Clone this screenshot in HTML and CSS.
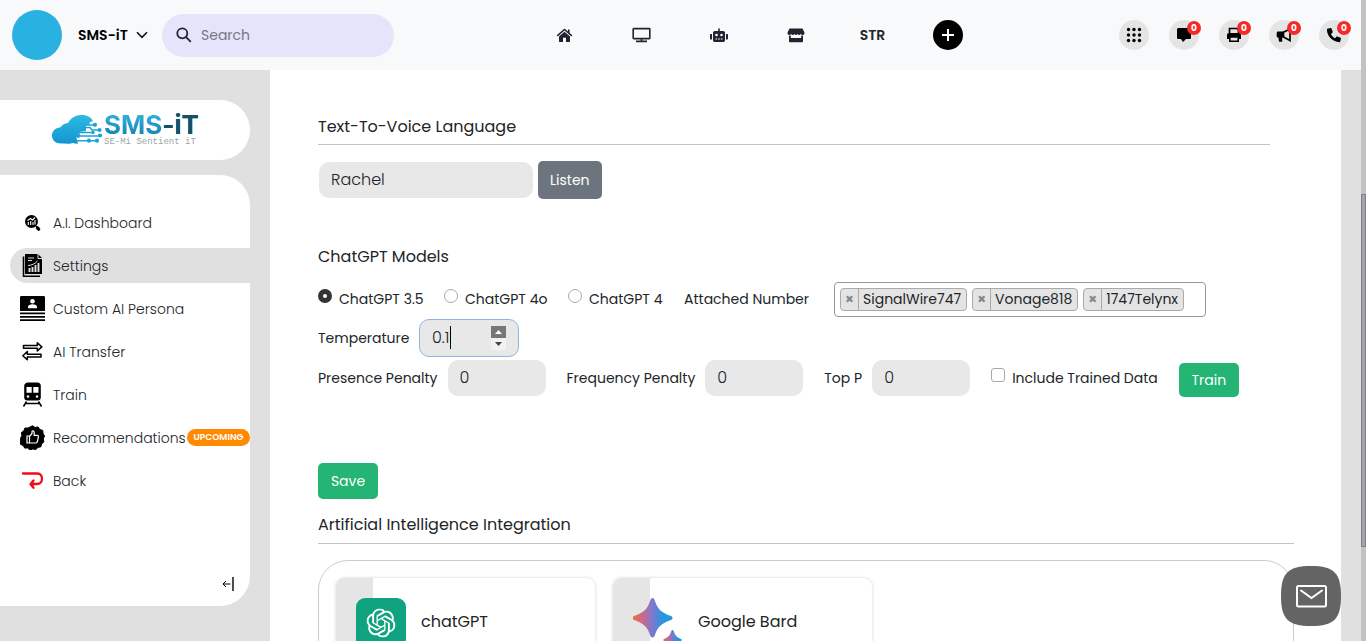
FILE: index.html
```html
<!DOCTYPE html>
<html lang="en">
<head>
<meta charset="utf-8">
<meta name="viewport" content="width=device-width, initial-scale=1">
<title>SMS-iT Settings</title>
<link rel="stylesheet" href="styles.css">
</head>
<body>
<div class="app">
  <header class="topbar">
    <div class="brand">
      <span class="avatar"></span>
      <button class="account" type="button">SMS-iT
        <svg width="12" height="8" viewBox="0 0 12 8" fill="none" stroke="#111" stroke-width="1.6"><path d="M1 1.2 6 6.4 11 1.2"/></svg>
      </button>
      <label class="search">
        <svg width="16" height="16" viewBox="0 0 16 16" fill="none" stroke="#212330" stroke-width="1.8"><circle cx="6.3" cy="6.3" r="5"/><path d="m9.8 9.8 5 5"/></svg>
        <input type="search" placeholder="Search" aria-label="Search">
      </label>
    </div>
    <nav class="topnav" aria-label="Main">
      <a href="#home" aria-label="Home"><svg width="17" height="15" viewBox="0 0 17 15" fill="#212330"><path d="M8.5 3.8 3 8.4v5.1c0 .3.2.5.5.5H7V9.8h3V14h3.5c.3 0 .5-.2.5-.5V8.400z"/><path d="M1.200 7.800 8.500 1.500l7.300 6.300M12.800 1.500v3.600" fill="none" stroke="#212330" stroke-width="1.600"/></svg></a>
      <a href="#desktop" aria-label="Desktop"><svg width="19" height="16" viewBox="0 0 19 16" fill="none" stroke="#212330" stroke-width="1.600"><rect x="1.200" y="1.600" width="16.600" height="10" rx=".5"/><path d="M9.500 12v2.400M4 14.400h11"/></svg></a>
      <a href="#bots" aria-label="Bots"><svg width="18" height="15" viewBox="0 0 18 15" fill="#212330"><path d="M8.200.5h1.600V3h3.400c1 0 1.800.8 1.800 1.800v7.400c0 1-.8 1.800-1.800 1.800H4.800c-1 0-1.800-.8-1.800-1.800V4.800C3 3.800 3.800 3 4.800 3h3.400zM0 7c0-.6.500-1 1-1h1v5.500H1c-.6 0-1-.5-1-1zM16 6h1c.6 0 1 .4 1 1v3.500c0 .500-.4 1-1 1h-1z"/><circle cx="6.500" cy="7" r="1.300" fill="#f8f9fb"/><circle cx="11.500" cy="7" r="1.300" fill="#f8f9fb"/><path d="M5.500 11h1.700M8.200 11h1.600M10.800 11h1.700" stroke="#f8f9fb" stroke-width="1.200"/></svg></a>
      <a href="#store" aria-label="Store"><svg width="18" height="15" viewBox="0 0 18 15" fill="#212330"><path d="M2.600.5h12.800L17.300 4c.6 1.500-.2 3-1.600 3-.9 0-1.500-.4-1.900-1-.8 1.300-2.600 1.300-3.300 0-.8 1.300-2.500 1.300-3.200 0-.8 1.300-2.500 1.300-3.300 0C3.600 6.600 3 7 2.200 7 .900 7 .1 5.500.700 4zM2 7.500h1.800V10h10.400V7.500H16V13c0 .8-.4 1.300-1.200 1.300H3.200C2.400 14.300 2 13.800 2 13z"/></svg></a>
      <a href="#str" class="str">STR</a>
      <button class="add" type="button" aria-label="Add"><svg width="14" height="14" viewBox="0 0 14 14" stroke="#fff" stroke-width="2"><path d="M7 1v12M1 7h12"/></svg></button>
    </nav>
    <div class="tools">
      <button class="tool" type="button" aria-label="Apps"><svg width="16" height="16" viewBox="0 0 16 16"><circle cx="2.500" cy="2.500" r="1.700"/><circle cx="8" cy="2.500" r="1.700"/><circle cx="13.500" cy="2.500" r="1.700"/><circle cx="2.500" cy="8" r="1.700"/><circle cx="8" cy="8" r="1.700"/><circle cx="13.500" cy="8" r="1.700"/><circle cx="2.500" cy="13.500" r="1.700"/><circle cx="8" cy="13.500" r="1.700"/><circle cx="13.500" cy="13.500" r="1.700"/></svg></button>
      <button class="tool" type="button" aria-label="Messages"><svg width="16" height="16" viewBox="0 0 16 16"><path d="M2.500 1h11C14.600 1 15 1.600 15 2.500v8c0 1-.6 1.500-1.500 1.500H10l-3 3-2-3H2.500C1.500 12 1 11.500 1 10.500v-8C1 1.600 1.500 1 2.500 1z"/></svg><span class="count">0</span></button>
      <button class="tool" type="button" aria-label="Fax"><svg width="16" height="16" viewBox="0 0 16 16"><path d="M3.500 6V1.500H11L12.500 3v3" fill="none" stroke="#000" stroke-width="1.700"/><path d="M3 6h10c1.200 0 2 .8 2 2v4h-2.500v-1.500h-9V12H1V8c0-1.200.8-2 2-2z"/><path d="M3.800 10h8.400v4.200H3.800z" fill="#e4e4e4" stroke="#000" stroke-width="1.600"/></svg><span class="count">0</span></button>
      <button class="tool" type="button" aria-label="Campaigns"><svg width="16" height="16" viewBox="0 0 16 16"><path d="M2 4.500h6v6H6.200v4.200H3l-.6-4.200H2C1.200 10.500.7 10 .7 9.200V6c0-.9.5-1.500 1.300-1.500z"/><path d="M7.500 5.300 14 2v11.500L7.500 10z" fill="none" stroke="#000" stroke-width="1.700"/></svg><span class="count">0</span></button>
      <button class="tool" type="button" aria-label="Calls"><svg width="16" height="16" viewBox="0 0 16 16"><path d="m1.500 1.800 3-.8c.4-.1.800.1 1 .5l1.200 3.200c.1.400 0 .8-.3 1L4.900 7c.9 1.900 2.300 3.300 4.200 4.200l1.300-1.500c.3-.3.700-.4 1-.3l3.200 1.300c.4.200.5.600.4.900l-.8 3c-.1.300-.4.600-.8.600C6.900 15.200.9 9.200.9 2.600c0-.4.3-.7.600-.8z"/></svg><span class="count">0</span></button>
    </div>
  </header>

  <div class="body">
    <aside class="sidebar">
      <div class="logo-card">
        <svg width="51" height="30" viewBox="0 0 51 30" aria-hidden="true">
          <defs><linearGradient id="cloud" x1="0" y1="0" x2="0" y2="1"><stop offset="0" stop-color="#2eb9e2"/><stop offset="1" stop-color="#1496d1"/></linearGradient></defs>
          <path fill="url(#cloud)" d="M9 28.500C3.500 28.500 0 25 0 20.500 0 16.500 3 13 8.500 12.300 10 10 12 8.500 16 8 19 2.500 24 0 30 0c5.500 0 9 2.500 11 6l-3 1-1 3h-3v6l-7 1-3 4 2 7.500c-3 .5-5-.5-5-.500-3 1.300-8 .500-12 .500z"/>
          <g stroke="#1ca4d8" stroke-width="1.500" fill="none"><path d="M33 10h9M30 12.500h8l2 2.500h8M25 17.500h15M28 21h20M25 25.700h20"/></g>
          <g fill="#1ca4d8"><circle cx="43" cy="9.800" r="2.100"/><circle cx="47.500" cy="15" r="2.100"/><circle cx="41" cy="17.500" r="1.700"/><circle cx="48" cy="20.500" r="2.100"/><circle cx="26" cy="20.500" r="2.400"/><circle cx="37" cy="25.700" r="2.100"/><circle cx="45" cy="25.700" r="2.100"/></g>
        </svg>
        <div class="wordmark"><strong>SMS<span>-iT</span></strong><small>SE-Mi Sentient iT</small></div>
      </div>
      <nav class="menu" aria-label="A.I.">
        <a href="#dashboard"><svg width="25" height="25" viewBox="0 0 25 25"><circle cx="11.500" cy="11.500" r="6.500"/><path d="m17.500 18 1.200 1.200" stroke="#000" stroke-width="3.200" stroke-linecap="round"/><path d="m15 15 3 3" stroke="#000" stroke-width="1.200"/><path d="M8.300 15v-3M10.700 15v-4M13 15v-3M15 14.500V10M7.500 10.500l3-2 2 1.500L15 7.500" stroke="#fff" stroke-width="1.100" fill="none"/></svg>A.I. Dashboard</a>
        <a href="#settings" class="active" aria-current="page"><svg width="25" height="25" viewBox="0 0 25 25"><path d="M5 1h13l4 4v16H5z"/><path d="M3.500 3.500v19.700H20" fill="none" stroke="#000" stroke-width="1.600"/><path d="M18 1v4.500h4.500" fill="none" stroke="#e0e0e0" stroke-width="1"/><path d="M9.500 19v-4M12.500 19v-5M15.500 19v-7M18.500 19v-9" stroke="#e0e0e0" stroke-width="1.900"/><path d="M8 12.500c3 0 7-1.500 9.500-4.500M8 5h6M8 7.500h4" stroke="#e0e0e0" stroke-width="1" fill="none"/></svg>Settings</a>
        <a href="#persona"><svg width="25" height="25" viewBox="0 0 25 25"><path d="M1.500 0h22C24.500 0 25 .5 25 1.500V15H0V1.500C0 .5.5 0 1.500 0zM0 16.500h25v1.700H0zM0 20h25v1.700H0zM0 23.300h25V25H0z"/><circle cx="12.500" cy="5.200" r="2.300" fill="#fff"/><path d="M8 12.300V11c0-2 2-2.800 4.500-2.800S17 9 17 11v1.300z" fill="#fff"/></svg>Custom AI Persona</a>
        <a href="#transfer"><svg width="25" height="25" viewBox="0 0 25 25" fill="none" stroke="#000" stroke-width="1.500" stroke-linejoin="round"><path d="M3.500 6.500h13.800V3.800l4.500 4.100-4.500 4V9.300H3.500zM21 15.300H7.300v-2.700l-4.500 4.100 4.500 4V18H21z"/></svg>AI Transfer</a>
        <a href="#train"><svg width="25" height="25" viewBox="0 0 25 25"><path d="M8 .500h9.500c2 0 3.300 1.300 3.300 3.300v11.700c0 1.700-1.300 3-3 3H7.200c-1.700 0-3-1.300-3-3V3.800C4.200 1.800 6 .5 8 .5z"/><path d="M6.500 5h5.200v5.700H6.500zM13.300 5h5.200v5.700h-5.200z" fill="#fff"/><circle cx="8" cy="14.500" r="1.200" fill="#fff"/><circle cx="17" cy="14.500" r="1.200" fill="#fff"/><path d="m6.500 19.500-3 5M18.500 19.500l3 5M5.500 21.500h14" stroke="#000" stroke-width="1.500"/></svg>Train</a>
        <a href="#recommendations"><svg width="25" height="25" viewBox="0 0 25 25"><path stroke="#000" stroke-width="1" stroke-linejoin="round" d="m12.500.8 2.600 1.700 3-.6 1.700 2.600 3 .9.200 3 1.500 2.600-1.200 2.900.6 3-2.300 2-.7 2.900-3 .6-2 2.200-3-.7-2.800 1.100-2.400-2-3 .100-1.500-2.600-2.800-1.200-.2-3L.600 13.200l1.300-2.700-.5-3 2.500-1.700 1-2.800 3 .1z"/><path d="M7 11h2.500v7H7zM9.500 11.500l2.500-3V6.800c0-1.300 2.200-1.300 2.200.8v2.700h3c1 0 1.400.7 1.200 1.500l-1 4.900c-.2.900-.8 1.300-1.600 1.300H9.500" fill="none" stroke="#fff" stroke-width="1.200"/></svg>Recommendations<span class="pill">UPCOMING</span></a>
        <a href="#back"><svg width="25" height="25" viewBox="0 0 25 25" fill="none" stroke="#f30b16" stroke-width="2.300" stroke-linecap="round" stroke-linejoin="round"><path d="M3 5.500h14.500c6 0 6 10.500 0 10.500h-6"/><path d="m13.500 12.500-3 3.800 3 3.500" fill="#f30b16"/></svg>Back</a>
        <button class="collapse" type="button" aria-label="Collapse menu"><svg width="12" height="14" viewBox="0 0 12 14" fill="none" stroke="#000"><path d="M8.500 7H1m3-3L1 7l3 3"/><path d="M11 0v14" stroke-width="1.400"/></svg></button>
      </nav>
    </aside>

    <main class="content">
      <section class="voice">
        <h2 class="heading ruled">Text-To-Voice Language</h2>
        <div class="voice-row">
          <input class="field" type="text" value="Rachel" aria-label="Voice">
          <button class="btn grey" type="button">Listen</button>
        </div>
      </section>

      <form class="models">
        <h2 class="heading">ChatGPT Models</h2>
        <div class="row first">
          <div class="radios">
            <label class="choice"><input type="radio" name="model" checked>ChatGPT 3.5</label>
            <label class="choice"><input type="radio" name="model">ChatGPT 4o</label>
            <label class="choice"><input type="radio" name="model">ChatGPT 4</label>
          </div>
          <span class="attached" id="numbers">Attached Number</span>
          <ul class="tags" aria-labelledby="numbers">
            <li><button type="button" aria-label="Remove SignalWire747">×</button><span>SignalWire747</span></li>
            <li><button type="button" aria-label="Remove Vonage818">×</button><span>Vonage818</span></li>
            <li><button type="button" aria-label="Remove 1747Telynx">×</button><span>1747Telynx</span></li>
          </ul>
        </div>
        <div class="row second">
          <label for="temperature">Temperature</label>
          <span class="stepper">
            <input class="field focused" id="temperature" type="number" step="0.1" value="0.1">
            <span class="caret"></span>
            <span class="spin">
              <button class="up" type="button" aria-label="Increase"><svg width="7" height="4" viewBox="0 0 7 4" fill="#fff"><path d="M0 4 3.500 0 7 4z"/></svg></button>
              <button type="button" aria-label="Decrease"><svg width="7" height="4" viewBox="0 0 7 4" fill="#444"><path d="M0 0h7L3.500 4z"/></svg></button>
            </span>
          </span>
        </div>
        <div class="row third">
          <label class="pair">Presence Penalty<input class="field" type="number" value="0"></label>
          <label class="pair">Frequency Penalty<input class="field" type="number" value="0"></label>
          <label class="pair">Top P<input class="field" type="number" value="0"></label>
          <label class="choice"><input type="checkbox">Include Trained Data</label>
          <button class="btn train" type="button">Train</button>
        </div>
        <button class="btn save" type="submit">Save</button>
      </form>

      <section>
        <h2 class="heading ruled">Artificial Intelligence Integration</h2>
        <div class="integrations">
          <article class="card">
            <svg width="50" height="50" viewBox="0 0 50 50"><rect width="50" height="50" rx="9" fill="#10a37f"/><svg x="10.500" y="10.500" width="29" height="29" viewBox="0 0 24 24" fill="#fff"><path d="M22.282 9.821a5.985 5.985 0 0 0-.516-4.910 6.046 6.046 0 0 0-6.510-2.900A6.065 6.065 0 0 0 4.981 4.182a5.985 5.985 0 0 0-3.998 2.900 6.046 6.046 0 0 0 .743 7.097 5.980 5.980 0 0 0 .511 4.911 6.051 6.051 0 0 0 6.515 2.900A5.985 5.985 0 0 0 13.260 24a6.056 6.056 0 0 0 5.772-4.206 5.990 5.990 0 0 0 3.998-2.900 6.056 6.056 0 0 0-.748-7.073zM13.260 22.430a4.476 4.476 0 0 1-2.876-1.041l.141-.080 4.779-2.758a.795.795 0 0 0 .393-.681v-6.737l2.020 1.169a.071.071 0 0 1 .038.052v5.583a4.504 4.504 0 0 1-4.495 4.493zM3.600 18.304a4.471 4.471 0 0 1-.535-3.014l.142.085 4.783 2.759a.771.771 0 0 0 .781 0l5.843-3.369v2.332a.080.080 0 0 1-.033.062L9.740 19.950a4.499 4.499 0 0 1-6.140-1.646zM2.341 7.896a4.485 4.485 0 0 1 2.366-1.973V11.600a.766.766 0 0 0 .388.677l5.815 3.355-2.020 1.168a.076.076 0 0 1-.071 0l-4.830-2.787A4.504 4.504 0 0 1 2.341 7.872zm16.597 3.856-5.833-3.388 2.014-1.164a.076.076 0 0 1 .071 0l4.830 2.791a4.494 4.494 0 0 1-.676 8.105v-5.678a.790.790 0 0 0-.406-.666zm2.010-3.024-.141-.085-4.774-2.782a.776.776 0 0 0-.786 0L9.409 9.230V6.897a.066.066 0 0 1 .028-.061l4.831-2.787a4.499 4.499 0 0 1 6.680 4.660zM8.307 12.863l-2.020-1.164a.080.080 0 0 1-.038-.057V6.075a4.499 4.499 0 0 1 7.375-3.453l-.142.080L8.704 5.460a.795.795 0 0 0-.393.681zm1.097-2.365 2.602-1.500 2.607 1.500v2.999l-2.597 1.500-2.607-1.500z"/></svg></svg>
            <span>chatGPT</span>
          </article>
          <article class="card">
            <svg width="50" height="50" viewBox="0 0 50 50"><defs><linearGradient id="bard"><stop offset="0" stop-color="#f0713c"/><stop offset=".28" stop-color="#c46a94"/><stop offset=".5" stop-color="#7e78cf"/><stop offset=".72" stop-color="#2f93df"/><stop offset="1" stop-color="#1f9be0"/></linearGradient></defs><path fill="url(#bard)" d="M19.500 0c1.200 0 1.700.8 2.200 2.200C24.500 11 28 14.500 38 18c2 .8 2 3.200 0 4C28 25.500 24.500 29 21.700 37.800c-.7 2.200-3.700 2.200-4.400 0C14.500 29 11 25.500 1 22c-2-.8-2-3.200 0-4 10-3.500 13.500-7 16.300-15.800C17.800.8 18.300 0 19.500 0z"/><path fill="url(#bard)" d="M39.500 32c.7 0 1 .5 1.300 1.300C42 37.500 44 39.500 48 41c1 .4 1 1.600 0 2-4 1.500-6 3.500-7.200 7h-2.600c-1.200-3.500-3.200-5.500-7.200-7-1-.4-1-1.600 0-2 4-1.500 6-3.500 7.200-7.700.3-.8.600-1.300 1.300-1.300z"/></svg>
            <span>Google Bard</span>
          </article>
        </div>
      </section>
    </main>
  </div>
</div>
<div class="scrollbar"><span class="thumb"></span></div>
<button class="mail" type="button" aria-label="Messages"><svg width="60" height="60" viewBox="0 0 60 60"><path fill="#646464" d="M30 0c23 0 30 7 30 30s-7 30-30 30S0 53 0 30 7 0 30 0z"/><g fill="none" stroke="#fff" stroke-width="2"><rect x="16" y="20" width="29" height="20.500" rx="1.500"/><path d="m20 24.500 10.500 7.500L41 24.500" stroke-linecap="round"/></g></svg></button>
</body>
</html>
```
FILE: styles.css
```css
* { box-sizing: border-box; }
body {
  margin: 0;
  height: 100vh;
  overflow: hidden;
  display: flex;
  background: #e0e0e0;
  color: #212529;
  font: 14px/24px Poppins, Inter, "Open Sans", sans-serif;
}
button, input { font: inherit; color: inherit; }
button { border: 0; padding: 0; background: none; cursor: pointer; }
a { color: inherit; text-decoration: none; }
svg { flex: none; display: block; }

.app { flex: 1; min-width: 0; display: flex; flex-direction: column; }

.topbar {
  flex: none;
  height: 70px;
  padding: 0 12px;
  display: flex;
  align-items: center;
  justify-content: space-between;
  background: #f8f9fb;
}
.brand { display: flex; align-items: center; }
.avatar { width: 50px; height: 50px; border-radius: 50%; background: #28b1e1; }
.account {
  width: 70px;
  margin: 0 14px 0 16px;
  display: flex;
  align-items: center;
  justify-content: space-between;
  font-weight: 600;
  color: #000;
}
.search {
  width: 232px;
  height: 43px;
  padding: 0 16px 0 14px;
  display: flex;
  align-items: center;
  gap: 9px;
  border-radius: 22px;
  background: #e4e4fa;
}
.search input { width: 100%; border: 0; padding: 0; background: none; outline: 0; }
.search input::placeholder { color: #777783; }
.topnav { display: flex; gap: 29px; }
.topnav > * { width: 48px; height: 30px; display: grid; place-items: center; }
.str { font-weight: 600; }
.topnav .add { width: 30px; margin: 0 10px 0 7px; border-radius: 50%; background: #000; }
.tools { display: flex; gap: 20px; }
.tool {
  position: relative;
  width: 30px;
  height: 30px;
  display: grid;
  place-items: center;
  border-radius: 50%;
  background: #e4e4e4;
}
.count {
  position: absolute;
  top: 1px;
  right: -2px;
  width: 14px;
  height: 14px;
  border-radius: 50%;
  background: #f62929;
  color: #fff;
  font-size: 9px;
  font-weight: 700;
  line-height: 14px;
}

.body { flex: 1; min-height: 0; display: flex; }
.sidebar { flex: none; width: 270px; padding: 30px 20px 0 0; }
.logo-card {
  height: 60px;
  padding-left: 52px;
  display: flex;
  align-items: center;
  gap: 1px;
  border-radius: 0 30px 30px 0;
  background: #fff;
}
.wordmark { display: flex; flex-direction: column; }
.wordmark strong {
  font: 700 26px/24px Inter, sans-serif;
  color: transparent;
  background: linear-gradient(#32b5df, #167fb0);
  background-clip: text;
}
.wordmark strong span { color: #174f69; }
.wordmark small { font: 9px/10px "Liberation Mono", monospace; color: #9aa5aa; }

.menu {
  margin-top: 15px;
  padding: 30px 0 15px;
  display: flex;
  flex-direction: column;
  gap: 8px;
  border-radius: 0 30px 30px 0;
  background: #fff;
}
.menu a {
  height: 35px;
  margin-left: 10px;
  padding-left: 10px;
  display: flex;
  align-items: center;
  border-radius: 18px 0 0 18px;
  font-weight: 300;
  white-space: nowrap;
}
.menu a svg { margin-right: 8px; }
.menu .active { background: #e0e0e0; }
.pill {
  flex: none;
  width: 63px;
  margin-left: auto;
  border-radius: 9px;
  background: #ff8a00;
  color: #fff;
  font-size: 9px;
  font-weight: 600;
  line-height: 17px;
  text-align: center;
}
.collapse { align-self: flex-end; margin: 71px 16px 0 0; }

.content { flex: 1; min-width: 0; margin-right: 20px; padding: 45px 47px 0 48px; background: #fff; }
.heading { margin: 0; font-size: 16px; font-weight: 400; }
.ruled { padding-bottom: 6px; border-bottom: 1px solid #c4c4c4; }
.voice { margin-right: 24px; }
.voice .ruled { padding-bottom: 5px; }
.voice-row { margin: 16px 0 46px; display: flex; align-items: center; gap: 5px; }
.field {
  width: 98px;
  height: 36px;
  padding: 0 12px 1px;
  border: 0;
  border-radius: 10px;
  background: #e8e8e8;
  font-size: 16px;
  font-weight: 300;
  appearance: textfield;
}
.field::-webkit-inner-spin-button { appearance: none; }
.voice-row .field { width: 214px; margin-left: 1px; }
.btn {
  min-width: 60px;
  height: 36px;
  padding: 0 12px;
  border-radius: 5px;
  background: #24b574;
  color: #fff;
}
.btn.grey { height: 38px; background: #6c757d; }

.row { display: flex; align-items: center; }
.first { margin-top: 13px; height: 35px; }
.radios { width: 366px; padding-bottom: 2px; display: grid; grid-template-columns: 126px 124px auto; }
.choice { display: flex; align-items: center; gap: 7px; white-space: nowrap; }
.choice input {
  appearance: none;
  flex: none;
  width: 14px;
  height: 14px;
  margin: 0 0 6px;
  border: 1px solid #aaa;
  border-radius: 50%;
  background: #fff;
}
.choice input:checked { border: 5px solid #333; }
.choice input[type="checkbox"] { border-radius: 3px; }
.attached { width: 150px; padding-bottom: 2px; }
.tags {
  width: 372px;
  height: 35px;
  margin: 0;
  padding: 0 5px;
  display: flex;
  align-items: center;
  gap: 5px;
  list-style: none;
  border: 1px solid #999;
  border-radius: 4px;
}
.tags li {
  height: 23px;
  display: flex;
  align-items: center;
  border: 1px solid #aaa;
  border-radius: 4px;
  background: #e4e4e4;
}
.tags button { width: 18px; height: 21px; border-right: 1px solid #aaa; color: #888; font-weight: 700; line-height: 21px; }
.tags span { padding: 0 5px 0 4px; line-height: 21px; }

.second { margin-top: 2px; }
.second label { width: 101px; }
.stepper { position: relative; }
.focused { display: block; width: 100px; height: 38px; border: 1px solid #8db4e8; }
.caret { position: absolute; left: 31px; top: 7px; width: 1px; height: 23px; background: #000; }
.spin { position: absolute; right: 13px; top: 7px; width: 15px; background: #f2f2f2; }
.spin button { width: 15px; height: 12px; display: grid; place-items: center; }
.spin .up { background: #777; }

.third { height: 36px; margin-top: 3px; gap: 21px; }
.pair { display: flex; align-items: center; gap: 10px; white-space: nowrap; }
.train { height: 34px; margin-top: 4px; }
.save { margin: 67px 0 14px; display: block; }

.integrations {
  height: 320px;
  margin-top: 16px;
  padding: 16px;
  display: flex;
  align-items: flex-start;
  gap: 16px;
  border: 1px solid #ccc;
  border-radius: 30px;
}
.card {
  width: 261px;
  height: 140px;
  padding: 20px 20px 0;
  display: flex;
  gap: 15px;
  border: 1px solid #eee;
  border-radius: 10px;
  box-shadow: 0 0 3px #e8e8e8;
  background: linear-gradient(90deg, #e5e5e5 37px, #fff 37px);
  font-size: 16px;
  line-height: 48px;
}

.scrollbar { flex: none; width: 5px; padding-top: 194px; background: #c2c2c2; }
.thumb { display: block; height: 353px; border: 1px solid #7b8186; background: #a3a5a8; }
.mail { position: fixed; right: 25px; bottom: 15px; }
```
